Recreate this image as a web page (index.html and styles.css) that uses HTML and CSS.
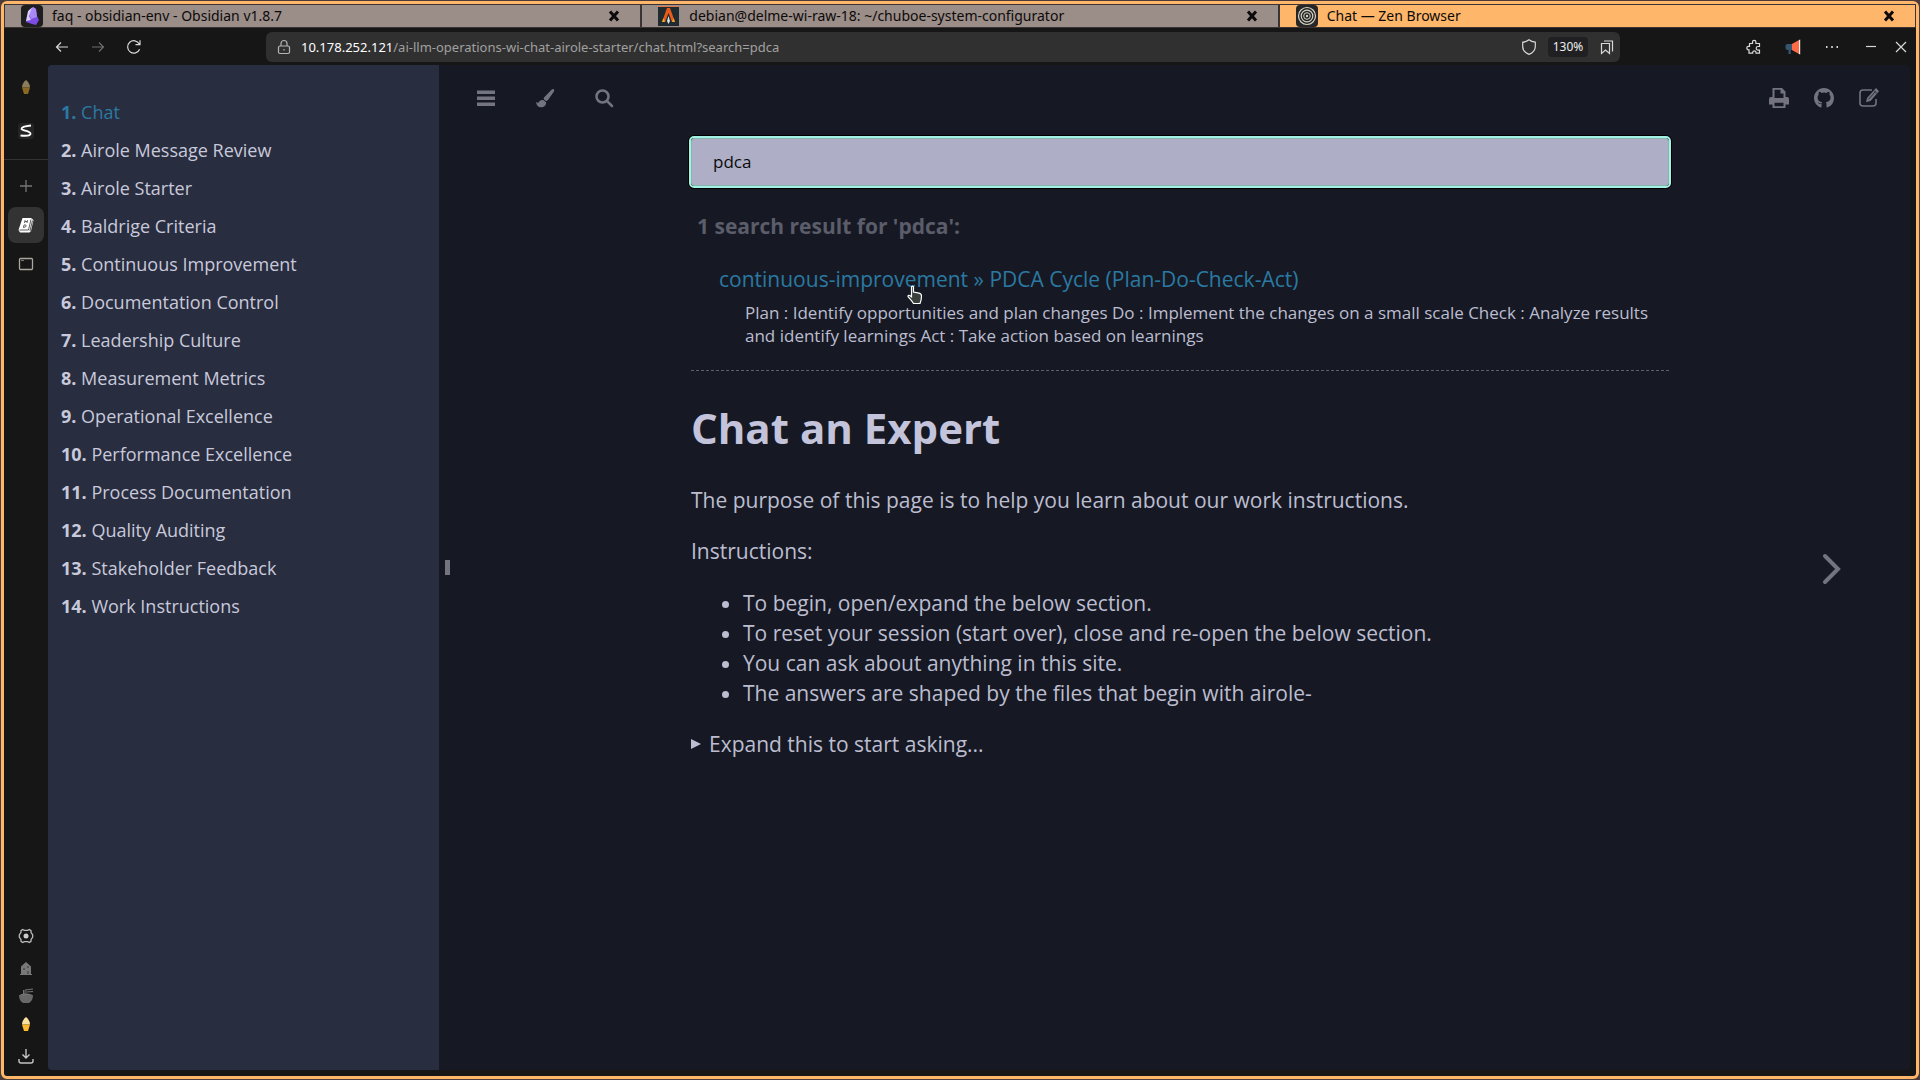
FILE: index.html
```html
<!DOCTYPE html>
<html lang="en">
<head>
<meta charset="utf-8">
<title>Chat</title>
<link rel="stylesheet" href="styles.css">
</head>
<body>
<div class="frame">
  <header class="tabs">
    <div class="tab">
      <svg class="tab-icon" viewBox="0 0 22 22"><rect width="22" height="22" rx="4" fill="#1e1e1e"/><path d="M12 2l3 2 1 7 2 4-3 5-4-1-6-2 1-5 3-7z" fill="#7c4be0"/><path d="M12 2l3 2 1 8-6 2-2-5 1-4z" fill="#a98af5"/><path d="M11 2.500L8 11l2 4-5 1 1-5 1-5z" fill="#d9ccff"/></svg>
      <span class="tab-title">faq - obsidian-env - Obsidian v1.8.7</span>
      <button class="tab-close" aria-label="Close"><svg viewBox="0 0 12 12"><path d="M2 1.500l8 9M10 1.500l-8 9"/></svg></button>
    </div>
    <div class="tab">
      <svg class="tab-icon" viewBox="0 0 22 22"><rect y="1" width="21" height="20" fill="#1f2b2f"/><path d="M0 1h21v1H0z" fill="#e07a4a"/><path d="M9 3h3l5 14h-3l-3.500-9L7 17H4z" fill="#e8591c"/><path d="M5.500 13L4 17h3zM15.500 13l1.500 4h-3z" fill="#f7a823"/><path d="M10.500 11l1.500 5-1.500 3L9 16z" fill="#cfe7ee"/></svg>
      <span class="tab-title">debian@delme-wi-raw-18: ~/chuboe-system-configurator</span>
      <button class="tab-close" aria-label="Close"><svg viewBox="0 0 12 12"><path d="M2 1.500l8 9M10 1.500l-8 9"/></svg></button>
    </div>
    <div class="tab tab-active">
      <svg class="tab-icon" viewBox="0 0 22 22"><rect width="22" height="22" rx="4" fill="#262626"/><g fill="none" stroke="#d6d2c4"><circle cx="11" cy="11" r="8.500" stroke-width="1.200"/><circle cx="11" cy="11" r="5.800" stroke-width="1.200"/><circle cx="11" cy="11" r="3.300"/></g><circle cx="11" cy="11" r="1.200" fill="#d6d2c4"/></svg>
      <span class="tab-title">Chat — Zen Browser</span>
      <button class="tab-close" aria-label="Close"><svg viewBox="0 0 12 12"><path d="M2 1.500l8 9M10 1.500l-8 9"/></svg></button>
    </div>
  </header>

  <div class="toolbar">
    <div class="nav-buttons">
      <button class="tool" aria-label="Back"><svg viewBox="0 0 16 16"><path d="M14 8H2.500M7 3.500L2.500 8 7 12.500"/></svg></button>
      <button class="tool tool-dim" aria-label="Forward"><svg viewBox="0 0 16 16"><path d="M2 8h11.500M9 3.500L13.500 8 9 12.500"/></svg></button>
      <button class="tool" aria-label="Reload"><svg viewBox="0 0 16 16"><path d="M13.600 10.200A6.200 6.200 0 1 1 13.300 5M14 1.200V5.700H9.500"/></svg></button>
    </div>
    <div class="address">
      <svg class="lock" viewBox="0 0 16 16"><rect x="2.500" y="7" width="11" height="7.500" rx="1.500"/><path d="M5 7V4.500a3 3 0 0 1 6 0V7M8 10v1.500"/></svg>
      <span class="url"><b class="host">10.178.252.121</b>/ai-llm-operations-wi-chat-airole-starter/chat.html?search=pdca</span>
      <button class="tool" aria-label="Protection"><svg viewBox="0 0 16 16"><path d="M8 .8c2 1.700 4 2.200 6.300 2.400v4.300c0 3.500-2.400 6.300-6.300 7.900-3.900-1.600-6.300-4.400-6.300-7.900V3.200C4 3 6 2.500 8 .8z"/></svg></button>
      <button class="zoom-level">130%</button>
      <button class="tool" aria-label="Bookmark"><svg viewBox="0 0 16 16"><path d="M2.500 4.500h8v10l-4-3.500-4 3.500zM5 2h8.500v10.500"/></svg></button>
    </div>
    <div class="window-buttons">
      <button class="tool" aria-label="Extensions"><svg viewBox="0 0 16 16"><path d="M3.500 4.500h3V3a1.700 1.700 0 0 1 3.400 0v1.500h3.600v3H12a1.800 1.800 0 0 0 0 3.600h1.500v3H10v-1a1.700 1.700 0 0 0-3.300 0v1H3v-3.300H2.500a1.700 1.700 0 0 1 0-3.400h1z"/></svg></button>
      <button class="tool" aria-label="Announcements"><svg viewBox="0 0 16 16"><g stroke="none"><path d="M14 1l1.200-.5v15L14 15z" fill="#e8eef0"/><path d="M6 5.500L14 1v14l-8-4.500z" fill="#ff6b45"/><path d="M2.500 5H7v6H5.800v4H3.500v-4h-1a2 2 0 0 1-2-2V7a2 2 0 0 1 2-2z" fill="#34566e"/></g></svg></button>
      <button class="tool" aria-label="Menu"><svg viewBox="0 0 16 16"><path d="M2 8h1.500M7.200 8h1.600M12.500 8h1.500" stroke-width="1.800"/></svg></button>
      <div class="window-controls">
        <button class="tool" aria-label="Minimize"><svg viewBox="0 0 16 16"><path d="M3 7.500h10"/></svg></button>
        <button class="tool" aria-label="Close window"><svg viewBox="0 0 16 16"><path d="M3 3l10 10M13 3L3 13"/></svg></button>
      </div>
    </div>
  </div>

  <div class="workspace">
    <aside class="rail">
      <div class="rail-pinned">
        <svg class="rail-icon rail-faded" viewBox="0 0 16 16"><path d="M8 1c2.500 2 4 4.500 4 7.500H4C4 5.500 5.500 3 8 1z" fill="#ffe2a0"/><path d="M4 8.500h8L10 15H6z" fill="#ffb92e"/></svg>
        <svg class="rail-icon" viewBox="0 0 16 16"><rect width="16" height="16" rx="3" fill="#242424"/><path d="M13 2.500C8 3 3.500 4 3.500 6c0 1.500 9 2 9 4.500S8 13 2.500 12.500" fill="none" stroke="#fff" stroke-width="1.800"/></svg>
      </div>
      <div class="rail-tabs">
        <button class="rail-button" aria-label="New tab"><svg class="rail-icon" viewBox="0 0 16 16"><path d="M8 2v12M2 8h12" stroke="#777" stroke-width="1.300"/></svg></button>
        <button class="rail-button rail-current" aria-label="Chat"><svg class="rail-icon" viewBox="0 0 16 16"><path d="M4.500 1h8.500l2.500 2-2.500 11-1.500 1.500H2L.5 13z" fill="#fff"/><path d="M13 2.500L10.500 13H1.500M14.500 3.500L12 14" fill="none" stroke="#333" stroke-width=".8"/><path d="M6.500 6l.5-2.500 1 1.500L9.500 3.500 9 6M5.500 10.500L6 8c3-.5 3 2-.5 2.500z" fill="none" stroke="#333" stroke-width=".8"/></svg></button>
        <button class="rail-button" aria-label="Blank tab"><svg class="rail-icon" viewBox="0 0 16 16"><rect x="1.500" y="2.500" width="13" height="11" rx="1" fill="none" stroke="#aaa79f" stroke-width="1.300"/><path d="M3 4.500h3" stroke="#777"/></svg></button>
      </div>
      <div class="rail-bottom">
        <svg class="rail-icon" viewBox="0 0 16 16"><path d="M4.700 1.500l1.600.9h3.400l1.600-.9 1.700 1.200v1.700L14.700 7v2L13 11.600v1.700l-1.700 1.200-1.600-.9H6.300l-1.600.9L3 13.300v-1.700L1.300 9V7L3 4.400V2.700z" fill="none" stroke="#bbb" stroke-width="1.300"/><circle cx="8" cy="8" r="2.500" fill="#ccc"/></svg>
        <div class="rail-spaces">
          <svg class="rail-icon" viewBox="0 0 16 16"><path d="M8 2l5 4.500V14h1v1H2v-1h1V6.500z" fill="#787878"/><path d="M5 8h2v2H5zM9 6h2v2H9zM9 11h2v3H9z" fill="#575757"/></svg>
          <svg class="rail-icon" viewBox="0 0 16 16"><path d="M1 7h14c0 4-1.500 6.500-4 8H5C2.500 13.500 1 11 1 7z" fill="#686868"/><path d="M2 7c1-2 10-2 12 0z" fill="#747474"/><path d="M5.500 8V2M7 8V2l8-1M8 4l7-.5" fill="none" stroke="#747474"/></svg>
          <svg class="rail-icon" viewBox="0 0 16 16"><path d="M8 1c2.500 2 4 4.500 4 7.500H4C4 5.500 5.500 3 8 1z" fill="#ffe2a0"/><path d="M4 8.500h8L10 15H6z" fill="#ffb92e"/></svg>
        </div>
        <svg class="rail-icon" viewBox="0 0 16 16"><path d="M8 1v9M4.500 6.500L8 10l3.500-3.500M1 11v2a2 2 0 0 0 2 2h10a2 2 0 0 0 2-2v-2" fill="none" stroke="#c4c4c4" stroke-width="1.400"/></svg>
      </div>
    </aside>

    <div class="book">
      <nav class="sidebar">
        <ol class="chapters">
          <li><a class="active" href="#"><strong>1.</strong> Chat</a></li>
          <li><a href="#"><strong>2.</strong> Airole Message Review</a></li>
          <li><a href="#"><strong>3.</strong> Airole Starter</a></li>
          <li><a href="#"><strong>4.</strong> Baldrige Criteria</a></li>
          <li><a href="#"><strong>5.</strong> Continuous Improvement</a></li>
          <li><a href="#"><strong>6.</strong> Documentation Control</a></li>
          <li><a href="#"><strong>7.</strong> Leadership Culture</a></li>
          <li><a href="#"><strong>8.</strong> Measurement Metrics</a></li>
          <li><a href="#"><strong>9.</strong> Operational Excellence</a></li>
          <li><a href="#"><strong>10.</strong> Performance Excellence</a></li>
          <li><a href="#"><strong>11.</strong> Process Documentation</a></li>
          <li><a href="#"><strong>12.</strong> Quality Auditing</a></li>
          <li><a href="#"><strong>13.</strong> Stakeholder Feedback</a></li>
          <li><a href="#"><strong>14.</strong> Work Instructions</a></li>
        </ol>
      </nav>
      <div class="resizer"><span class="grip"></span></div>
      <div class="page">
        <div class="menu-bar">
          <div class="menu-group menu-left">
            <button class="menu-icon" aria-label="Toggle contents"><svg viewBox="0 0 20 20"><path d="M1 2.500h18v3.500H1zM1 8.500h18V12H1zM1 14.500h18V18H1z"/></svg></button>
            <button class="menu-icon" aria-label="Change theme"><svg viewBox="0 0 20 20"><path d="M18.700 1.200c.8.600.6 1.500.2 2.300l-5.700 8.300c-.7 1-1.700 1.400-2.700.9l-1.400-1.100c-.6-.8-.4-1.700.4-2.500L16.800 1.500c.6-.5 1.300-.7 1.900-.3zM8.200 12l2.900 2.200c.1 3.200-2 5-5 5C3.200 19.200 1.500 17.500 1 14c1 .7 1.800 1.100 2.600.6.700-1.900 2.300-2.900 4.600-2.600z"/></svg></button>
            <button class="menu-icon" aria-label="Search"><svg viewBox="0 0 20 20"><g fill="none" stroke="#737480" stroke-width="2.500" stroke-linecap="round"><circle cx="8.500" cy="8.500" r="6"/><path d="M13 13l5 5"/></g></svg></button>
          </div>
          <div class="menu-group menu-right">
            <a class="menu-icon" href="#" aria-label="Print"><svg viewBox="0 0 20 20"><path fill-rule="evenodd" d="M4 0h9l3.500 3.500V9H18a2 2 0 0 1 2 2v5.500h-3.500V20h-13v-3.500H0V11a2 2 0 0 1 2-2h1.500V0zm1.500 1.800V10h9V5.500h-3V1.800zm0 13v3.400h9v-3.400z"/></svg></a>
            <a class="menu-icon" href="#" aria-label="Git repository"><svg viewBox="0 0 16 16"><path d="M8 0C3.580 0 0 3.580 0 8c0 3.540 2.290 6.530 5.470 7.590.4.070.55-.17.55-.38v-2.500C4.500 13 3.500 12.200 3.200 11.300c.8.100 1.300 1.300 2.900 1.100.1-.6.300-.9.500-1.100-2.300-.3-3.700-1.200-3.700-3.900 0-.9.300-1.700.9-2.200-.2-.7-.2-1.500.1-2.200.8 0 1.600.4 2.200.9a7.600 7.600 0 0 1 3.900 0c.7-.5 1.500-.9 2.200-.9.300.7.300 1.500.1 2.200.6.600.9 1.300.9 2.200 0 2.700-1.500 3.600-3.800 3.900.4.300.6.900.6 1.600v2.300c0 .21.150.46.550.38A8 8 0 0 0 16 8c0-4.420-3.580-8-8-8z"/></svg></a>
            <a class="menu-icon" href="#" aria-label="Edit"><svg viewBox="0 0 20 20"><path d="M13 2H4a3 3 0 0 0-3 3v10a3 3 0 0 0 3 3h10a3 3 0 0 0 3-3v-4" fill="none" stroke="#737480" stroke-width="1.600"/><path d="M17 0l3 3.200L11.500 13 7 14.200 8 10z"/><path d="M9.500 11.300l7-7.800M15 2.500l3 3" stroke="#161923" stroke-width=".8"/></svg></a>
          </div>
        </div>

        <div class="content">
          <input class="searchbar" type="search" aria-label="Search this book" value="pdca">
          <section class="results">
            <div class="results-header">1 search result for 'pdca':</div>
            <ul class="results-list">
              <li>
                <a class="result-link" href="#">continuous-improvement » PDCA Cycle (Plan-Do-Check-Act)</a>
                <span class="teaser">Plan : Identify opportunities and plan changes Do : Implement the changes on a small scale Check : Analyze results and identify learnings Act : Take action based on learnings</span>
              </li>
            </ul>
          </section>
          <main class="article">
            <h1>Chat an Expert</h1>
            <p>The purpose of this page is to help you learn about our work instructions.</p>
            <p>Instructions:</p>
            <ul>
              <li>To begin, open/expand the below section.</li>
              <li>To reset your session (start over), close and re-open the below section.</li>
              <li>You can ask about anything in this site.</li>
              <li>The answers are shaped by the files that begin with airole-</li>
            </ul>
            <details>
              <summary>Expand this to start asking...</summary>
            </details>
          </main>
        </div>
        <a class="next" href="#" aria-label="Next chapter"><svg viewBox="0 0 20 32"><path d="M3 3l13 13L3 29"/></svg></a>
      </div>
    </div>
  </div>
</div>
<svg class="pointer" viewBox="0 0 16 20"><path d="M4.500 2c0-1.300 2-1.300 2 0v5l5.500 1.200c1.700.4 2.500 1.200 2.500 2.800 0 3-.5 5-1.500 7.500H6.500C5 16 3 14 1.200 11.800c-.6-1 .5-2 1.500-1.300l1.800 1.300z"/></svg>
</body>
</html>
```
FILE: styles.css
```css
* { box-sizing: border-box; }

html, body { height: 100%; }

body {
  margin: 0;
  padding: 1px;
  background: #4a3a3a;
  font-family: "Open Sans", "Noto Sans", sans-serif;
  overflow: hidden;
}

button { border: 0; padding: 0; background: none; font: inherit; color: inherit; }
a { color: inherit; text-decoration: none; }
svg { display: block; }

.frame {
  display: flex;
  flex-direction: column;
  height: 100%;
  border: 3px solid #fdb66a;
  border-radius: 6px;
  background: #161616;
}

/* Window tabs */
.tabs {
  display: grid;
  grid-template-columns: repeat(3, 1fr);
  height: 24px;
  border-bottom: 1px solid #3a3432;
  font: 14px/22px "Noto Sans", sans-serif;
  color: #0c0a0a;
}
.tab {
  display: flex;
  align-items: center;
  gap: 9px;
  padding: 0 20px 0 16px;
  background: #9b8d88;
  border: 1px solid #3a3432;
  border-bottom: 0;
}
.tab-active { background: #fdb66a; }
.tab-icon { width: 22px; height: 22px; }
.tab-title { flex: 1; white-space: nowrap; }
.tab-close svg { width: 12px; height: 12px; stroke: #0c0a0a; stroke-width: 3; }

/* Browser toolbar */
.toolbar {
  display: flex;
  align-items: center;
  height: 37px;
  padding: 0 7px 0 50px;
  font-family: "Noto Sans", sans-serif;
  font-size: 13px;
  color: #a0a0a0;
}
.tool svg {
  width: 16px;
  height: 16px;
  fill: none;
  stroke: #d8d8d8;
  stroke-width: 1.2;
}
.tool-dim { opacity: .45; }
.nav-buttons { display: flex; gap: 20px; width: 212px; }
.address {
  display: flex;
  align-items: center;
  gap: 11px;
  flex: 1;
  max-width: 1354px;
  height: 30px;
  padding: 0 5px 0 10px;
  background: #303030;
  border-radius: 6px;
}
.lock { width: 16px; height: 16px; margin-right: -2px; fill: none; stroke: #b4b4b4; stroke-width: 1.2; }
.url { flex: 1; white-space: nowrap; }
.host { font-weight: 400; color: #fff; }
.zoom-level { width: 40px; height: 20px; border-radius: 4px; background: #202022; color: #eee; font-size: 12px; }
.window-buttons { display: flex; gap: 23px; margin-left: auto; }
.window-controls { display: flex; gap: 14px; }

/* Workspace */
.workspace { flex: 1; display: flex; min-height: 0; }
.rail {
  display: flex;
  flex-direction: column;
  width: 44px;
}
.rail-icon { width: 16px; height: 16px; }
.rail-faded { opacity: .5; }
.rail-pinned {
  display: flex;
  flex-direction: column;
  align-items: center;
  gap: 28px;
  padding: 14px 0 20px;
  border-bottom: 1px solid #333;
}
.rail-tabs { display: flex; flex-direction: column; align-items: center; padding-top: 8px; gap: 3px; }
.rail-button { display: grid; place-items: center; width: 36px; height: 36px; border-radius: 8px; }
.rail-current { background: #333; }
.rail-bottom {
  display: flex;
  flex-direction: column;
  align-items: center;
  gap: 16px;
  margin-top: auto;
  padding-bottom: 12px;
}
.rail-spaces { display: flex; flex-direction: column; gap: 12px; }

/* Book */
.book {
  flex: 1;
  display: flex;
  margin: 0 6px 6px 0;
  border-radius: 4px;
  overflow: hidden;
  background: #161923;
  color: #bcbdd0;
}
.sidebar { width: 391px; background: #282d3f; color: #c8c9db; }
.chapters { margin: 0; padding: 28px 13px; list-style: none; font-size: 18px; line-height: 38px; }
.active { color: #2b79a2; }
.resizer { display: flex; align-items: center; width: 11px; padding-left: 6px; }
.grip { width: 5px; height: 15px; background: #737480; }
.page { position: relative; flex: 1; }
.menu-bar {
  display: flex;
  justify-content: space-between;
  align-items: center;
  height: 65px;
  padding: 0 31px 0 26px;
}
.menu-group { display: flex; }
.menu-left { gap: 39px; }
.menu-right { gap: 25px; }
.menu-icon svg { width: 20px; height: 20px; fill: #737480; }

.content { max-width: 978px; margin: 0 auto; padding-top: 8px; font-size: 21px; line-height: 30px; }
.searchbar {
  appearance: none;
  display: block;
  width: 100%;
  height: 48px;
  padding: 0 21px 2px;
  border: 1px solid #85b7ad;
  border-radius: 3px;
  outline: 2px solid #a3f0e5;
  box-shadow: 0 0 0 3px #000;
  background: #aeaec6;
  color: #0b0b0b;
  font: 17px "Open Sans", sans-serif;
}
.results { padding-bottom: 23px; border-bottom: 1px dashed #5c6068; }
.results-header { padding: 25px 0 0 6px; font-weight: 700; color: #5b5d6b; }
.results-list { margin: 0; padding: 23px 0 0 28px; list-style: none; }
.result-link { display: block; color: #2b79a2; }
.teaser { display: block; margin: 7px 19px 0 26px; font-size: 17px; line-height: 23px; }

.article h1 { margin: 25px 0 26px; font-size: 42px; line-height: 63px; color: #c3c4dc; }
.article p { margin: 0 0 21px; }
.article ul { margin: 22px 0 21px; padding-left: 52px; }
.article summary { display: flex; align-items: center; gap: 8px; list-style: none; }
.article summary::before {
  content: "";
  border-left: 10px solid #bcbdd0;
  border-top: 5px solid transparent;
  border-bottom: 5px solid transparent;
}

.next { position: absolute; right: 68px; top: 488px; }
.next svg { width: 20px; height: 32px; fill: none; stroke: #737480; stroke-width: 4; stroke-linecap: round; }

.pointer {
  position: absolute;
  left: 907px;
  top: 285px;
  width: 16px;
  height: 20px;
  fill: #3b3f3b;
  stroke: #fff;
  stroke-width: 1.2;
}
```
